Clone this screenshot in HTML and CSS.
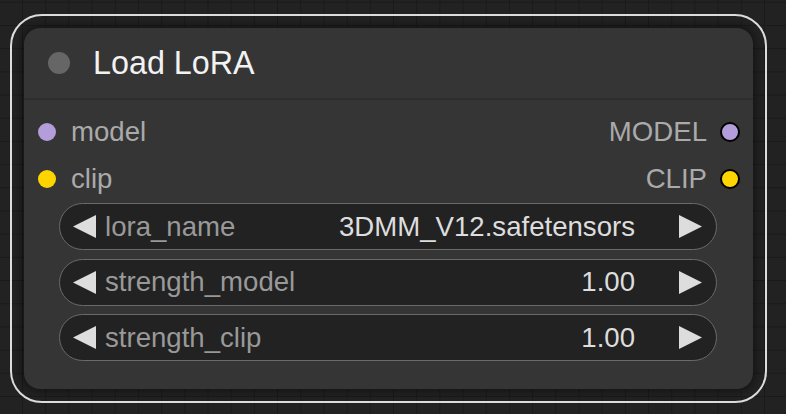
FILE: index.html
```html
<!DOCTYPE html>
<html>
<head>
<meta charset="utf-8">
<link rel="stylesheet" href="styles.css">
</head>
<body>
<div class="canvas">
  <div class="outline">
    <div class="node">
      <div class="title">
        <span class="title-dot"></span>
        <span class="title-text">Load LoRA</span>
      </div>
      <div class="slots">
        <div class="slot-row">
          <div class="slot-in"><span class="dot dot-model"></span><span>model</span></div>
          <div class="slot-out"><span>MODEL</span><span class="dot dot-model dot-out"></span></div>
        </div>
        <div class="slot-row">
          <div class="slot-in"><span class="dot dot-clip"></span><span>clip</span></div>
          <div class="slot-out"><span>CLIP</span><span class="dot dot-clip dot-out"></span></div>
        </div>
      </div>
      <div class="widgets">
        <div class="widget">
          <svg class="arrow" viewBox="0 0 23 23"><polygon points="23,0 23,23 0,11.5" fill="#dddddd"/></svg>
          <span class="w-label">lora_name</span>
          <span class="w-value">3DMM_V12.safetensors</span>
          <svg class="arrow arrow-r" viewBox="0 0 23 23"><polygon points="0,0 0,23 23,11.5" fill="#dddddd"/></svg>
        </div>
        <div class="widget">
          <svg class="arrow" viewBox="0 0 23 23"><polygon points="23,0 23,23 0,11.5" fill="#dddddd"/></svg>
          <span class="w-label">strength_model</span>
          <span class="w-value">1.00</span>
          <svg class="arrow arrow-r" viewBox="0 0 23 23"><polygon points="0,0 0,23 23,11.5" fill="#dddddd"/></svg>
        </div>
        <div class="widget">
          <svg class="arrow" viewBox="0 0 23 23"><polygon points="23,0 23,23 0,11.5" fill="#dddddd"/></svg>
          <span class="w-label">strength_clip</span>
          <span class="w-value">1.00</span>
          <svg class="arrow arrow-r" viewBox="0 0 23 23"><polygon points="0,0 0,23 23,11.5" fill="#dddddd"/></svg>
        </div>
      </div>
    </div>
  </div>
</div>
</body>
</html>
```
FILE: styles.css
```css
html, body {
  margin: 0;
  padding: 0;
}
body {
  width: 786px;
  height: 414px;
  overflow: hidden;
  background-color: #222222;
  background-image:
    linear-gradient(to right, #1a1a1a 1px, transparent 1px),
    linear-gradient(to bottom, #1a1a1a 1px, transparent 1px);
  background-size: 23.2px 23.2px;
  background-position: -1.2px 1.8px;
  font-family: "Liberation Sans", Arial, sans-serif;
}
.canvas {
  padding: 14px 0 0 10px;
}
.outline {
  box-sizing: border-box;
  width: 757px;
  height: 389px;
  border: 2px solid #dcdcdc;
  border-radius: 32px;
  padding: 12px;
}
.node {
  box-sizing: border-box;
  width: 729px;
  height: 361px;
  background: #353535;
  border-radius: 16px;
  box-shadow: 0 0 8px 2px rgba(0, 0, 0, 0.45);
  display: flex;
  flex-direction: column;
}
.title {
  box-sizing: border-box;
  height: 72px;
  border-bottom: 2px solid #2d2d2d;
  display: flex;
  align-items: center;
  padding-left: 24px;
  gap: 23px;
}
.title-dot {
  width: 22px;
  height: 22px;
  border-radius: 50%;
  background: #666666;
}
.title-text {
  color: #f2f2f2;
  font-size: 32.3px;
  line-height: 1;
}
.slots {
  padding-top: 8px;
  display: flex;
  flex-direction: column;
}
.slot-row {
  height: 47px;
  display: flex;
  align-items: center;
  justify-content: space-between;
  padding: 0 13px 0 14px;
  font-size: 27.6px;
  color: #aaaaaa;
}
.slot-in, .slot-out {
  display: flex;
  align-items: center;
}
.slot-in {
  gap: 15px;
}
.slot-out {
  gap: 13px;
}
.dot {
  box-sizing: border-box;
  width: 18px;
  height: 18px;
  border-radius: 50%;
}
.dot-out {
  width: 20px;
  height: 20px;
  border: 2px solid #000000;
}
.dot-model {
  background: #b39ddb;
}
.dot-clip {
  background: #ffd500;
}
.widgets {
  display: flex;
  flex-direction: column;
  gap: 8.5px;
  padding: 1px 36px 0 35px;
}
.widget {
  box-sizing: border-box;
  height: 47px;
  border: 1.6px solid #6a6a6a;
  border-radius: 24px;
  background: #222222;
  display: flex;
  align-items: center;
  padding: 0 14px 0 13px;
  font-size: 27.6px;
}
.arrow {
  width: 23px;
  height: 23px;
  flex: none;
}
.w-label {
  color: #999999;
  margin-left: 9px;
}
.w-value {
  color: #dddddd;
  margin-left: auto;
  margin-right: 44px;
}
```
